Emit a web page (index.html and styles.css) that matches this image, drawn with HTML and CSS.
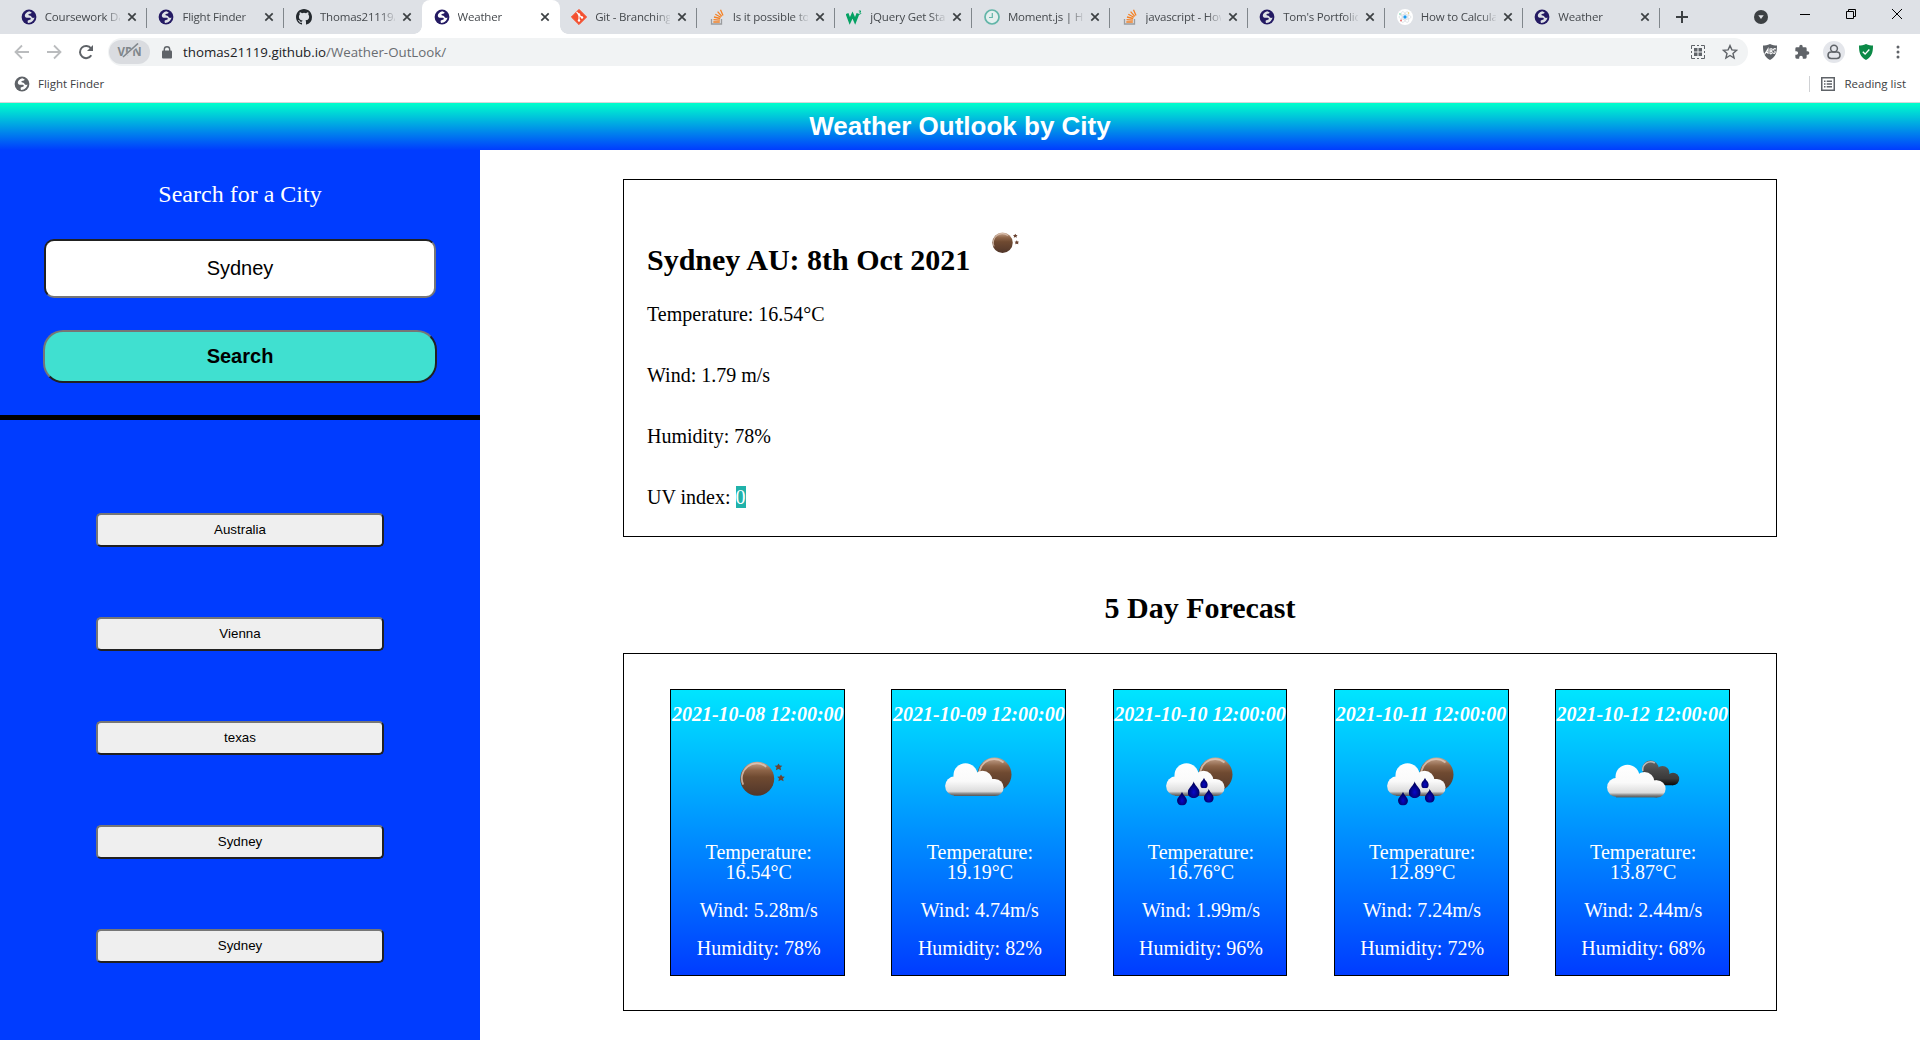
FILE: index.html
```html
<!DOCTYPE html>
<html lang="en">
<head>
<meta charset="utf-8">
<title>Weather</title>
<link rel="stylesheet" href="styles.css">
</head>
<body>
<svg class="defs" width="0" height="0" aria-hidden="true">
  <defs>
    <linearGradient id="moonFill" x1="0" y1="0" x2="0" y2="1">
      <stop offset="0" stop-color="#c9a892"/><stop offset=".25" stop-color="#8d6448"/><stop offset=".45" stop-color="#6f4a31"/><stop offset="1" stop-color="#51362a"/>
    </linearGradient>
    <linearGradient id="cloudFill" gradientUnits="userSpaceOnUse" x1="0" y1="34" x2="0" y2="67">
      <stop offset="0" stop-color="#fff"/><stop offset=".55" stop-color="#fafafa"/><stop offset=".86" stop-color="#dcdcdc"/><stop offset=".93" stop-color="#8a8a8a"/><stop offset="1" stop-color="#555"/>
    </linearGradient>
    <linearGradient id="darkFill" gradientUnits="userSpaceOnUse" x1="0" y1="32" x2="0" y2="57">
      <stop offset="0" stop-color="#666"/><stop offset=".4" stop-color="#484848"/><stop offset=".7" stop-color="#3a3a3a"/><stop offset="1" stop-color="#050505"/>
    </linearGradient>
    <radialGradient id="dropFill" cx=".5" cy=".65" r=".5">
      <stop offset="0" stop-color="#0808c8"/><stop offset="1" stop-color="#00005e"/>
    </radialGradient>
    <symbol id="moon" viewBox="0 0 36 36">
      <circle cx="18" cy="18" r="17" fill="url(#moonFill)"/>
      <path d="M4 24A15 15 0 0 1 27 6" fill="none" stroke="#e3cdbf" stroke-width="1.8" opacity=".75"/>
    </symbol>
    <symbol id="cloud" viewBox="0 0 100 100">
      <g fill="url(#cloudFill)"><circle cx="25.8" cy="57" r="9.7"/><circle cx="36.5" cy="46.3" r="12"/><circle cx="53.5" cy="51.7" r="10"/><circle cx="66" cy="58.5" r="8.6"/><rect x="25" y="50" width="41" height="17"/></g>
    </symbol>
    <symbol id="drop" viewBox="0 0 12 17"><path d="M6 0C6.6 4 12 7 12 11.3A6 5.7 0 0 1 0 11.3C0 7 5.4 4 6 0z" fill="url(#dropFill)"/></symbol>
    <symbol id="wClear" viewBox="0 0 100 100">
      <use href="#moon" x="31.2" y="31.7" width="36" height="36"/>
      <path d="M70.500 34.500l1.300 2.100 2.500.2-1.800 1.800.6 2.600-2.600-1.100-2.600 1.100.6-2.600-1.800-1.800 2.500-.2zM73 45.500l1.300 2.100 2.500.2-1.800 1.800.6 2.600-2.600-1.100-2.600 1.100.6-2.600-1.800-1.800 2.500-.2z" fill="#6a4433"/>
    </symbol>
    <symbol id="wFew" viewBox="0 0 100 100"><use href="#moon" x="47.500" y="27.500" width="36" height="36"/><use href="#cloud" width="100" height="100"/></symbol>
    <symbol id="wRain" viewBox="0 0 100 100">
      <use href="#wFew" width="100" height="100"/>
      <use href="#drop" x="37.7" y="52.2" width="12" height="17"/><use href="#drop" x="50.2" y="48.500" width="7.6" height="10.8"/>
      <use href="#drop" x="27" y="62.500" width="10" height="14"/><use href="#drop" x="53.8" y="59.8" width="10" height="14"/>
    </symbol>
    <symbol id="wBroken" viewBox="0 0 100 100">
      <g fill="url(#darkFill)"><circle cx="58.5" cy="39.8" r="8.3"/><circle cx="70.5" cy="44" r="7"/><circle cx="81" cy="50" r="6.2"/><path d="M55 40h15l11 8v8.2H58z"/></g>
      <path d="M50.8 42a8 8 0 0 1 12-8" fill="none" stroke="#bbb" stroke-width="1.5"/>
      <use href="#cloud" x="-1" y="1.4" width="100" height="100"/>
    </symbol>
    <symbol id="globe" viewBox="0 0 16 16">
      <circle cx="8" cy="8" r="7.4" fill="currentColor"/>
      <path d="M8.2 2.2C5.5 3 3.6 5 3.8 7c.2 1.500 2 2 3.800 1.800 1.500-.1 2.400.3 2.200 1.300-.2.900-1.500.9-2.500 1.100-.8.200-.9 1.100-.3 2.700 3.300.1 6-2.300 6.500-5.300-1.500.6-2.900.2-3.200-1-.3-1.100-1.700-.9-2.500-1.300-.9-.5-.2-1.600 1-1.600 1.200.1 1.900-.5 1.700-1.400z" fill="var(--land)"/>
    </symbol>
    <symbol id="x" viewBox="0 0 10 10"><path d="M1.300 1.300l7.400 7.400M8.700 1.300L1.300 8.700" stroke="#3c4043" stroke-width="1.700"/></symbol>
    <symbol id="stack" viewBox="0 0 16 16">
      <path d="M2.500 10v5h10v-5" fill="none" stroke="#9a9c9f" stroke-width="1.300"/>
      <path d="M4.300 13h6.500M4.500 10.600l6.400.6M5 8l6.200 1.500M6.300 5.200l5.600 3M8.600 2.600l4.200 4.800M11.500.8l2.500 5.600" stroke="#f48024" stroke-width="1.300" fill="none"/>
    </symbol>
  </defs>
</svg>

<div class="tabstrip">
  <div class="tab"><svg class="fav globe"><use href="#globe"/></svg><span class="label">Coursework Daily</span><svg class="close"><use href="#x"/></svg></div>
  <div class="tab"><svg class="fav globe"><use href="#globe"/></svg><span class="label">Flight Finder</span><svg class="close"><use href="#x"/></svg></div>
  <div class="tab last-before"><svg class="fav" viewBox="0 0 16 16"><path fill="#24292e" d="M8 0C3.580 0 0 3.580 0 8c0 3.540 2.290 6.530 5.470 7.590.4.070.55-.17.55-.38 0-.19-.01-.82-.01-1.490-2.010.37-2.530-.49-2.690-.94-.09-.23-.48-.94-.82-1.130-.28-.15-.68-.52-.01-.53.63-.01 1.080.58 1.230.82.72 1.210 1.870.87 2.330.66.07-.52.28-.87.51-1.070-1.780-.2-3.640-.89-3.640-3.950 0-.87.31-1.590.82-2.150-.08-.2-.36-1.020.08-2.120 0 0 .67-.21 2.200.82a7.400 7.400 0 0 1 4 0c1.530-1.040 2.200-.82 2.200-.82.44 1.100.16 1.920.08 2.120.51.56.82 1.270.82 2.150 0 3.070-1.870 3.750-3.650 3.950.29.25.54.73.54 1.480 0 1.070-.01 1.930-.01 2.200 0 .21.15.46.55.38A8.010 8.010 0 0 0 16 8c0-4.420-3.580-8-8-8z"/></svg><span class="label">Thomas21119/W</span><svg class="close"><use href="#x"/></svg></div>
  <div class="tab active"><svg class="fav globe"><use href="#globe"/></svg><span class="label">Weather</span><svg class="close"><use href="#x"/></svg></div>
  <div class="tab"><svg class="fav" viewBox="0 0 16 16"><path d="M8 .4L15.600 8 8 15.600.4 8z" fill="#f4502f" stroke="#f4502f" stroke-linejoin="round"/><path d="M5.500 3l2.500 2.500v6M8 6l3 2.500" stroke="#fff" fill="none" stroke-width="1.100"/><g fill="#fff"><circle cx="8" cy="5.500" r="1.200"/><circle cx="8" cy="11.500" r="1.200"/><circle cx="11" cy="8.500" r="1.200"/></g></svg><span class="label">Git - Branching</span><svg class="close"><use href="#x"/></svg></div>
  <div class="tab"><svg class="fav"><use href="#stack"/></svg><span class="label">Is it possible to</span><svg class="close"><use href="#x"/></svg></div>
  <div class="tab"><svg class="fav" viewBox="0 0 16 16"><path d="M1 4.500l2.800 7.300L6.500 6l2.600 5.800L12 4.500" fill="none" stroke="#04a163" stroke-width="3"/><path d="M12.800 2h2l-1 1.500c1.300.1 1.300 2-.8 1.700" fill="none" stroke="#04a163"/></svg><span class="label">jQuery Get Starte</span><svg class="close"><use href="#x"/></svg></div>
  <div class="tab"><svg class="fav" viewBox="0 0 16 16"><circle cx="8" cy="8" r="7" fill="#e4efee" stroke="#62b5a8" stroke-width="1.700"/><path d="M8.300 4v4.500H5" fill="none" stroke="#62b5a8" stroke-width="1.200"/></svg><span class="label">Moment.js | Ho</span><svg class="close"><use href="#x"/></svg></div>
  <div class="tab"><svg class="fav"><use href="#stack"/></svg><span class="label">javascript - How</span><svg class="close"><use href="#x"/></svg></div>
  <div class="tab"><svg class="fav globe"><use href="#globe"/></svg><span class="label">Tom's Portfolio</span><svg class="close"><use href="#x"/></svg></div>
  <div class="tab"><svg class="fav" viewBox="0 0 16 16"><circle cx="8" cy="8" r="8" fill="#fff"/><g fill="none" stroke="#d5dade" stroke-width=".6"><ellipse cx="8" cy="8" rx="6" ry="2.500"/><ellipse cx="8" cy="8" rx="6" ry="2.500" transform="rotate(60 8 8)"/><ellipse cx="8" cy="8" rx="6" ry="2.500" transform="rotate(-60 8 8)"/></g><circle cx="8" cy="8" r="1.700" fill="#1d9bf0"/><circle cx="3" cy="5" r=".8" fill="#5c9"/><circle cx="4" cy="11.500" r=".9" fill="#e66"/><circle cx="11.500" cy="4" r=".8" fill="#ec6"/></svg><span class="label">How to Calculat</span><svg class="close"><use href="#x"/></svg></div>
  <div class="tab"><svg class="fav globe"><use href="#globe"/></svg><span class="label">Weather</span><svg class="close"><use href="#x"/></svg></div>
  <svg class="newtab" viewBox="0 0 12 12"><path d="M6 0v12M0 6h12" stroke="#3c4043" stroke-width="2"/></svg>
  <div class="winbtns">
    <svg width="14" height="14" viewBox="0 0 14 14" class="search-tabs"><circle cx="7" cy="7" r="7" fill="#3c4043"/><path d="M4.300 5.300h5.400L7 9z" fill="#dee1e6"/></svg>
    <svg width="10" height="10" viewBox="0 0 10 10"><path d="M0 5.500h10" stroke="#000"/></svg>
    <svg width="10" height="10" viewBox="0 0 10 10"><path d="M.5 2.500h7v7h-7zM2.500 2.500v-2h7v7h-2" fill="none" stroke="#000"/></svg>
    <svg width="10" height="10" viewBox="0 0 10 10"><path d="M0 0l10 10M10 0L0 10" stroke="#000"/></svg>
  </div>
</div>

<div class="toolbar">
  <div class="nav">
    <svg width="16" height="16" viewBox="0 0 16 16"><path d="M15 8H2M8 1.500L1.500 8 8 14.500" fill="none" stroke="#babcbe" stroke-width="1.800"/></svg>
    <svg width="16" height="16" viewBox="0 0 16 16"><path d="M1 8h13M8 1.500L14.500 8 8 14.500" fill="none" stroke="#babcbe" stroke-width="1.800"/></svg>
    <svg width="16" height="16" viewBox="0 0 16 16"><path d="M13.300 11.200A6.100 6.100 0 1 1 13 4.400" fill="none" stroke="#5f6368" stroke-width="2"/><path d="M15 1v6H9z" fill="#5f6368"/></svg>
  </div>
  <div class="omnibox">
    <div class="vpn">VPN<svg viewBox="0 0 22 16"><path d="M4.500 14.500L19.500 1" stroke="#dadce0" stroke-width="3"/><path d="M4 14L19 .5" stroke="#80868b" stroke-width="1.600"/></svg></div>
    <svg class="lock" width="10" height="13" viewBox="0 0 10 13"><rect x="0" y="4.500" width="10" height="8" rx="1" fill="#5f6368"/><path d="M2.300 5V3.500a2.700 2.700 0 0 1 5.400 0V5" fill="none" stroke="#5f6368" stroke-width="1.400"/></svg>
    <div class="url">thomas21119.github.io<span>/Weather-OutLook/</span></div>
    <svg width="14" height="14" viewBox="0 0 14 14"><path d="M.5 4V.5H4M6 .5h2M10 .5h3.500V4M13.500 6v2M13.500 10v3.500H10M8 13.500H6M4 13.500H.5V10M.5 8V6" fill="none" stroke="#5f6368"/><path d="M3 3h3.500v3.500H3zM7.500 3H11v3.500H7.500zM3 7.500h3.500V11H3zM7.500 7.500H11V11H7.500z" fill="#5f6368"/></svg>
    <svg class="star" width="16" height="16" viewBox="0 0 16 16"><path d="M8 1.600l1.900 4.300 4.700.4-3.600 3.100 1.100 4.600L8 11.500 3.900 14 5 9.400 1.400 6.300l4.700-.4z" fill="none" stroke="#5f6368" stroke-width="1.400"/></svg>
  </div>
  <div class="exts">
    <svg width="16" height="16" viewBox="0 0 16 16"><path d="M8 0c2.500 1.500 5 1.500 7 1.500 0 7-1 11-7 14.500C2 12.500 1 8.500 1 1.500 3 1.500 5.500 1.500 8 0z" fill="#5f6368"/><path d="M2.500 10.500L6 5v5M3.500 8.500H6M8 10V5c3-1 3 1.800.3 2.300C11 7 11 10 8 10M14 5c-2-1-3 .5-2 1.500M11 9c2 1 3-1 1.500-2" fill="none" stroke="#fff" stroke-width="1.100"/></svg>
    <svg width="16" height="16" viewBox="0 0 24 24"><path fill="#5f6368" d="M20.500 11H19V7a2 2 0 0 0-2-2h-4V3.500a2.500 2.500 0 0 0-5 0V5H4a2 2 0 0 0-2 2v3.800h1.500a2.700 2.700 0 0 1 0 5.400H2V20a2 2 0 0 0 2 2h3.800v-1.500a2.700 2.700 0 0 1 5.400 0V22H17a2 2 0 0 0 2-2v-4h1.500a2.500 2.500 0 0 0 0-5z"/></svg>
    <svg class="avatar" width="22" height="22" viewBox="0 0 22 22"><circle cx="11" cy="11" r="11" fill="#e4e6eb"/><circle cx="11" cy="7.600" r="3.400" fill="none" stroke="#5f6368" stroke-width="1.500"/><rect x="5" y="11" width="12" height="6.500" rx="3.200" fill="none" stroke="#5f6368" stroke-width="1.500"/></svg>
    <svg width="16" height="16" viewBox="0 0 16 16"><path d="M8 0c2.500 1.300 5 1.500 7 1.500 0 7-1 11-7 14.500C2 12.500 1 8.500 1 1.500 3 1.500 5.500 1.300 8 0z" fill="#0b8a47"/><path d="M4.800 7.800l2.300 2.300 4.200-4.600" fill="none" stroke="#fff" stroke-width="1.400"/></svg>
    <svg width="16" height="16" viewBox="0 0 16 16"><g fill="#5f6368"><circle cx="8" cy="3" r="1.500"/><circle cx="8" cy="8" r="1.500"/><circle cx="8" cy="13" r="1.500"/></g></svg>
  </div>
</div>

<div class="bookmarks">
  <svg class="fav globe gray"><use href="#globe"/></svg><span>Flight Finder</span>
  <div class="reading"><svg width="14" height="14" viewBox="0 0 14 14"><rect x=".75" y=".75" width="12.500" height="12.500" fill="none" stroke="#5f6368" stroke-width="1.500"/><path d="M3 4.200h1.500M3 7h1.500M3 9.800h1.500M5.700 4.200H11M5.700 7H11M5.700 9.800H11" stroke="#5f6368" stroke-width="1.500"/></svg><span>Reading list</span></div>
</div>

<header class="title"><h1>Weather Outlook by City</h1></header>
<div class="page">
  <aside class="sidebar">
    <form class="search">
      <label for="city">Search for a City</label>
      <input id="city" type="text" value="Sydney">
      <button type="button">Search</button>
    </form>
    <div class="history">
      <button>Australia</button><button>Vienna</button><button>texas</button><button>Sydney</button><button>Sydney</button>
    </div>
  </aside>
  <main>
    <section class="today">
      <div class="today-head"><h2>Sydney AU: 8th Oct 2021</h2><svg width="60" height="60"><use href="#wClear"/></svg></div>
      <p>Temperature: 16.54°C</p>
      <p>Wind: 1.79 m/s</p>
      <p>Humidity: 78%</p>
      <p>UV index: <span class="uv">0</span></p>
    </section>
    <h2 class="forecast-title">5 Day Forecast</h2>
    <section class="forecast">
      <article><h3>2021-10-08 12:00:00</h3><svg width="100" height="100"><use href="#wClear"/></svg><p>Temperature: 16.54°C</p><p>Wind: 5.28m/s</p><p>Humidity: 78%</p></article>
      <article><h3>2021-10-09 12:00:00</h3><svg width="100" height="100"><use href="#wFew"/></svg><p>Temperature: 19.19°C</p><p>Wind: 4.74m/s</p><p>Humidity: 82%</p></article>
      <article><h3>2021-10-10 12:00:00</h3><svg width="100" height="100"><use href="#wRain"/></svg><p>Temperature: 16.76°C</p><p>Wind: 1.99m/s</p><p>Humidity: 96%</p></article>
      <article><h3>2021-10-11 12:00:00</h3><svg width="100" height="100"><use href="#wRain"/></svg><p>Temperature: 12.89°C</p><p>Wind: 7.24m/s</p><p>Humidity: 72%</p></article>
      <article><h3>2021-10-12 12:00:00</h3><svg width="100" height="100"><use href="#wBroken"/></svg><p>Temperature: 13.87°C</p><p>Wind: 2.44m/s</p><p>Humidity: 68%</p></article>
    </section>
  </main>
</div>
</body>
</html>
```
FILE: styles.css
```css
* { box-sizing: border-box; }
body {
  margin: 0;
  height: 1040px;
  overflow: hidden;
  display: flex;
  flex-direction: column;
  background: #fff;
  font-family: "Liberation Serif", "Times New Roman", serif;
}
h1, h2, h3, p { margin: 0; }
svg { display: block; flex: none; }
.defs { position: absolute; }

/* tab strip */
.tabstrip {
  height: 34px;
  flex: none;
  display: flex;
  align-items: center;
  padding-left: 9.3px;
  background: #dee1e6;
  font: 11.5px/16px "Open Sans", sans-serif;
  letter-spacing: -0.2px;
  color: #45494d;
  --land: #dee1e6;
}
.tab {
  width: 137.6px;
  height: 34px;
  flex: none;
  display: flex;
  align-items: center;
  padding-left: 11.5px;
  background: linear-gradient(#80868b, #80868b) right 8px / 1px 20px no-repeat;
}
.tab.last-before { background: none; }
.tab.active {
  position: relative;
  background: #fff;
  border-radius: 8px 8px 0 0;
  --land: #fff;
}
.tab.active::before, .tab.active::after {
  content: "";
  position: absolute;
  bottom: 0;
  width: 8px;
  height: 8px;
}
.tab.active::before { left: -8px; background: radial-gradient(circle at 0 0, transparent 7.5px, #fff 8px); }
.tab.active::after { right: -8px; background: radial-gradient(circle at 100% 0, transparent 7.5px, #fff 8px); }
.fav { width: 16px; height: 16px; }
.globe { color: #241a63; }
.globe.gray { color: #5f6368; --land: #fff; }
.label {
  width: 75px;
  margin-left: 8px;
  overflow: hidden;
  white-space: nowrap;
  -webkit-mask-image: linear-gradient(90deg, #000 60px, transparent 77px);
  mask-image: linear-gradient(90deg, #000 60px, transparent 77px);
}
.close { width: 10px; height: 10px; margin-left: 7px; }
.newtab { width: 12px; height: 12px; margin-left: 16px; }
.winbtns { margin-left: auto; padding-right: 18px; display: flex; align-items: center; gap: 36px; height: 28px; align-self: flex-start; }
.search-tabs { margin: 6px -4px 0 0; }

/* toolbar */
.toolbar {
  height: 36px;
  flex: none;
  display: flex;
  align-items: center;
  padding-right: 14px;
}
.nav { width: 108px; display: flex; gap: 16px; padding-left: 14px; }
.omnibox {
  width: 1640px;
  height: 28px;
  display: flex;
  align-items: center;
  padding-right: 10px;
  border-radius: 14px;
  background: #f1f3f4;
}
.vpn {
  position: relative;
  width: 41px;
  height: 24px;
  margin-left: 1px;
  border-radius: 12px;
  background: #dadce0;
  color: #80868b;
  font: bold 11.5px/24px "Open Sans", sans-serif;
  text-align: center;
}
.vpn svg { position: absolute; left: 10px; top: 3px; width: 22px; height: 16px; }
.lock { margin-left: 12px; }
.url { flex: 1; margin-left: 11px; font: 13.3px/20px "Open Sans", sans-serif; color: #202124; }
.url span { color: #686c71; }
.star { margin-left: 17px; }
.exts { flex: 1; display: flex; align-items: center; gap: 16px; margin-left: 14px; }
.avatar { margin: 0 -3px; }

.bookmarks {
  height: 33px;
  flex: none;
  display: flex;
  align-items: center;
  padding: 0 14px 4px;
  border-bottom: 1px solid #d5d7da;
  font: 11.5px/16px "Open Sans", sans-serif;
  letter-spacing: 0;
  color: #3c4043;
  gap: 8px;
}
.reading {
  margin-left: auto;
  height: 16px;
  display: flex;
  align-items: center;
  gap: 9px;
  padding-left: 11px;
  border-left: 1px solid #cfd1d4;
}

/* page */
.title {
  height: 47px;
  flex: none;
  background: linear-gradient(#00ffcc, #003cff);
  color: #fff;
  text-align: center;
}
.title h1 { font: bold 26px/46px "Liberation Sans", Arial, sans-serif; }
.page { flex: 1; display: flex; min-height: 0; }
.sidebar { width: 480px; background: #003cff; }
.search {
  height: 270px;
  display: flex;
  flex-direction: column;
  align-items: center;
  padding-top: 30px;
  border-bottom: 5px solid #000;
}
.search label { font-size: 24px; line-height: 28px; color: #fff; }
.search input {
  width: 392px;
  height: 59px;
  margin-top: 31px;
  border: 2px inset #767676;
  border-radius: 10px;
  background: #fff;
  color: #000;
  text-align: center;
  font: 20px "Liberation Sans", Arial, sans-serif;
}
.search button {
  width: 394px;
  height: 53px;
  margin-top: 32px;
  border: 2px outset #767676;
  border-radius: 20px;
  background: #40e0d0;
  color: #000;
  font: bold 20px "Liberation Sans", Arial, sans-serif;
}
.history { display: flex; flex-direction: column; align-items: center; gap: 70px; padding-top: 93px; }
.history button {
  width: 288px;
  height: 34px;
  padding: 0 0 1px;
  border: 2px outset #767676;
  border-radius: 5px;
  background: #efefef;
  color: #000;
  font: 13.333px "Liberation Sans", Arial, sans-serif;
}
main { flex: 1; display: flex; flex-direction: column; align-items: center; padding-top: 29px; }
.today {
  width: 1154px;
  height: 358px;
  padding: 33px 0 0 23px;
  border: 1px solid #000;
  font-size: 20px;
  line-height: 22px;
}
.today-head { display: flex; gap: 3px; height: 63px; margin-bottom: 27px; }
h2 { font-size: 30px; line-height: 34px; }
.today-head h2 { margin-top: 30px; }
.today p { margin-bottom: 39px; }
.uv { background: #20b2aa; color: #fff; }
.forecast-title { margin: 54px 0 28px; }
.forecast {
  width: 1154px;
  height: 358px;
  display: flex;
  justify-content: space-evenly;
  padding-top: 35px;
  border: 1px solid #000;
}
.forecast article {
  width: 174.8px;
  height: 287px;
  display: flex;
  flex-direction: column;
  align-items: center;
  padding-top: 14px;
  border: 1px solid #000;
  background: linear-gradient(#00e5ff, #003cff);
  color: #fff;
  text-align: center;
  font-size: 20px;
  line-height: 20px;
}
.forecast h3 { font-size: 20px; line-height: 20px; font-style: italic; white-space: nowrap; }
.forecast svg { margin: 5px 0 13px; }
.forecast p { margin-bottom: 18px; padding-left: 2px; }
```
